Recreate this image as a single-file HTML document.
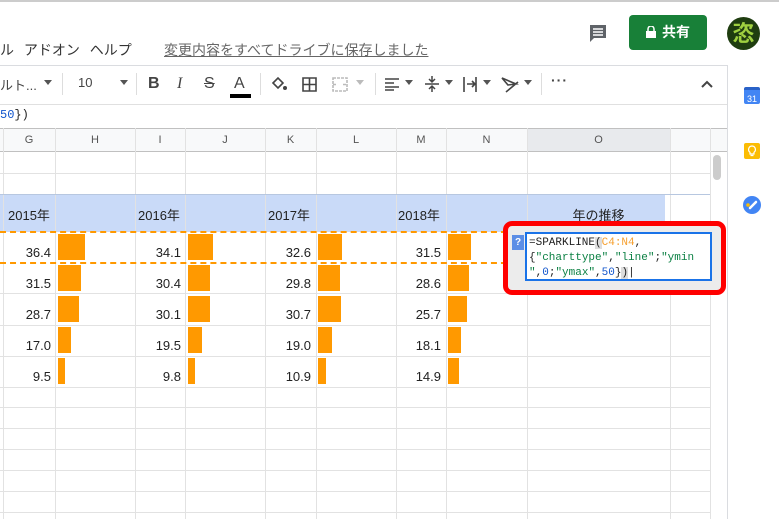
<!DOCTYPE html>
<html><head><meta charset="utf-8"><style>
*{margin:0;padding:0;box-sizing:border-box}
body{width:779px;height:519px;overflow:hidden;background:#fff;font-family:"Liberation Sans","Noto Sans CJK JP",sans-serif;position:relative;color:#222}
.a{position:absolute}
.vl{position:absolute;width:1px;background:#e2e2e2}
.hl{position:absolute;height:1px;background:#e2e2e2}
.num{position:absolute;font-size:13px;text-align:right;width:46px;color:#222}
.bar{position:absolute;background:#ff9900;height:26px}
.tb{position:absolute;top:75px;font-size:14px;color:#444}
.dd{position:absolute;top:80px;width:0;height:0;border-left:4px solid transparent;border-right:4px solid transparent;border-top:5px solid #555}
.dv{position:absolute;top:73px;width:1px;height:22px;background:#ddd}
.ch{position:absolute;top:134px;font-size:11px;color:#555;text-align:center}
.mono{font-family:"Liberation Mono",monospace}
</style></head><body>
<div class="a" style="left:0;top:0;width:779px;height:2px;background:#ccc"></div>
<div class="a" style="left:0;top:40px;font-size:14px;color:#333;white-space:nowrap;word-spacing:6px">ル アドオン ヘルプ</div>
<div class="a" style="left:164px;top:40px;font-size:14px;color:#666;text-decoration:underline;white-space:nowrap">変更内容をすべてドライブに保存しました</div>
<svg class="a" style="left:588px;top:23px" width="20" height="20" viewBox="0 0 20 20"><path d="M2 2h16v13H6l-4 4z" fill="#5f6368"/><path d="M5 6h10M5 9h10M5 12h10" stroke="#fff" stroke-width="1.5"/></svg>
<div class="a" style="left:629px;top:15px;width:78px;height:35px;background:#188038;border-radius:4px;color:#fff;font-size:14px;font-weight:bold;line-height:35px;padding-left:33px">共有</div>
<svg class="a" style="left:646px;top:26px" width="10" height="12" viewBox="0 0 10 12"><rect x="0" y="5" width="10" height="7" fill="#fff"/><path d="M2 5V3a3 3 0 0 1 6 0v2" stroke="#fff" stroke-width="1.5" fill="none"/></svg>
<div class="a" style="left:727px;top:17px;width:33px;height:33px;border-radius:50%;background:#1f3d10;color:#9fd040;font-size:22px;font-weight:bold;text-align:center;line-height:33px">恣</div>
<div class="hl" style="left:0;top:65px;width:727px;background:#dadce0"></div>
<div class="vl" style="left:727px;top:65px;height:454px;background:#dadce0"></div>
<div class="tb" style="left:0;font-size:13px">ルト...</div><div class="dd" style="left:44px"></div>
<div class="dv" style="left:62px"></div>
<div class="tb" style="left:78px;font-size:13px">10</div><div class="dd" style="left:120px"></div>
<div class="dv" style="left:136px"></div>
<div class="tb" style="left:148px;font-weight:bold;font-size:16px">B</div>
<div class="tb" style="left:177px;font-style:italic;font-size:16px;font-family:'Liberation Serif',serif">I</div>
<div class="tb" style="left:204px;font-size:16px;text-decoration:line-through">S</div>
<div class="tb" style="left:234px;font-size:16px">A</div>
<div class="a" style="left:230px;top:94px;width:21px;height:4px;background:#000"></div>
<div class="dv" style="left:260px"></div>
<svg class="a" style="left:270px;top:76px" width="18" height="16" viewBox="0 0 18 16"><path d="M3 7l5-5 5 5-5 5z" stroke="#444" stroke-width="1.6" fill="none"/><circle cx="15" cy="12" r="2" fill="#444"/></svg>
<svg class="a" style="left:302px;top:77px" width="15" height="15" viewBox="0 0 15 15"><path d="M1 1h13v13H1zM7.5 1v13M1 7.5h13" stroke="#444" stroke-width="1.6" fill="none"/></svg>
<svg class="a" style="left:332px;top:77px" width="16" height="15" viewBox="0 0 16 15"><path d="M1 1h14v13H1zM1 7.5h4M11 7.5h4" stroke="#bbb" stroke-width="1.6" fill="none" stroke-dasharray="3 1"/></svg>
<div class="dd" style="left:356px;border-top-color:#bbb"></div>
<div class="dv" style="left:375px"></div>
<svg class="a" style="left:384px;top:77px" width="16" height="14" viewBox="0 0 16 14"><path d="M1 2h14M1 6h9M1 10h14M1 13h9" stroke="#444" stroke-width="1.6"/></svg><div class="dd" style="left:405px"></div>
<svg class="a" style="left:424px;top:75px" width="16" height="18" viewBox="0 0 16 18"><path d="M1 9h14M8 1v5M8 12v5M5 4l3 3 3-3M5 14l3-3 3 3" stroke="#444" stroke-width="1.5" fill="none"/></svg><div class="dd" style="left:445px"></div>
<svg class="a" style="left:462px;top:76px" width="18" height="17" viewBox="0 0 18 17"><path d="M2 1v15M14 1v15M5 8h8M10 5l3 3-3 3" stroke="#444" stroke-width="1.6" fill="none"/></svg><div class="dd" style="left:483px"></div>
<svg class="a" style="left:500px;top:76px" width="20" height="17" viewBox="0 0 20 17"><path d="M2 2l14 6-8 1zM6 16l12-10" stroke="#444" stroke-width="1.6" fill="none"/></svg><div class="dd" style="left:524px"></div>
<div class="dv" style="left:541px"></div>
<div class="tb" style="left:551px;top:72px;font-weight:bold;letter-spacing:1px">···</div>
<svg class="a" style="left:700px;top:79px" width="14" height="10" viewBox="0 0 14 10"><path d="M2 8l5-5 5 5" stroke="#444" stroke-width="2" fill="none"/></svg>
<div class="hl" style="left:0;top:104px;width:727px;background:#e0e0e0"></div>
<div class="a mono" style="left:0;top:108px;font-size:12px;color:#222"><span style="color:#1155cc">50</span>})</div>
<div class="a" style="left:0;top:128px;width:727px;height:24px;background:#f8f9fa;border-top:1px solid #c0c0c0;border-bottom:1px solid #c0c0c0"></div>
<div class="a" style="left:527px;top:129px;width:143px;height:22px;background:#e8eaed"></div>
<div class="ch" style="left:3px;width:52px">G</div><div class="ch" style="left:55px;width:80px">H</div><div class="ch" style="left:135px;width:50px">I</div><div class="ch" style="left:185px;width:80px">J</div><div class="ch" style="left:265px;width:51px">K</div><div class="ch" style="left:316px;width:80px">L</div><div class="ch" style="left:396px;width:50px">M</div><div class="ch" style="left:446px;width:81px">N</div><div class="ch" style="left:527px;width:143px">O</div>
<div class="a" style="left:0;top:194px;width:665px;height:38px;background:#c9daf8"></div>
<div class="vl" style="left:3px;top:128px;height:391px"></div>
<div class="vl" style="left:55px;top:128px;height:391px"></div>
<div class="vl" style="left:135px;top:128px;height:391px"></div>
<div class="vl" style="left:185px;top:128px;height:391px"></div>
<div class="vl" style="left:265px;top:128px;height:391px"></div>
<div class="vl" style="left:316px;top:128px;height:391px"></div>
<div class="vl" style="left:396px;top:128px;height:391px"></div>
<div class="vl" style="left:446px;top:128px;height:391px"></div>
<div class="vl" style="left:527px;top:128px;height:391px"></div>
<div class="vl" style="left:670px;top:128px;height:391px"></div>
<div class="vl" style="left:710px;top:128px;height:391px"></div>
<div class="hl" style="left:0;top:173px;width:710px"></div>
<div class="hl" style="left:0;top:194px;width:710px;background:#b7c7e0"></div>
<div class="hl" style="left:0;top:293px;width:710px"></div>
<div class="hl" style="left:0;top:325px;width:710px"></div>
<div class="hl" style="left:0;top:356px;width:710px"></div>
<div class="hl" style="left:0;top:387px;width:710px"></div>
<div class="hl" style="left:0;top:407px;width:710px"></div>
<div class="hl" style="left:0;top:428px;width:710px"></div>
<div class="hl" style="left:0;top:449px;width:710px"></div>
<div class="hl" style="left:0;top:470px;width:710px"></div>
<div class="hl" style="left:0;top:491px;width:710px"></div>
<div class="hl" style="left:0;top:512px;width:710px"></div>
<div class="a" style="left:0;top:231px;width:527px;border-top:2px dashed #ff9900"></div>
<div class="a" style="left:0;top:262px;width:527px;border-top:2px dashed #ff9900"></div>
<div class="a" style="left:8px;top:205px;font-size:13px">2015年</div>
<div class="a" style="left:138px;top:205px;font-size:13px">2016年</div>
<div class="a" style="left:268px;top:205px;font-size:13px">2017年</div>
<div class="a" style="left:398px;top:205px;font-size:13px">2018年</div>
<div class="a" style="left:527px;top:205px;width:143px;text-align:center;font-size:13px">年の推移</div>
<div class="num" style="left:5px;top:245px">36.4</div><div class="bar" style="left:58px;top:234px;width:27px"></div>
<div class="num" style="left:135px;top:245px">34.1</div><div class="bar" style="left:188px;top:234px;width:25px"></div>
<div class="num" style="left:265px;top:245px">32.6</div><div class="bar" style="left:318px;top:234px;width:24px"></div>
<div class="num" style="left:395px;top:245px">31.5</div><div class="bar" style="left:448px;top:234px;width:23px"></div>
<div class="num" style="left:5px;top:276px">31.5</div><div class="bar" style="left:58px;top:265px;width:23px"></div>
<div class="num" style="left:135px;top:276px">30.4</div><div class="bar" style="left:188px;top:265px;width:22px"></div>
<div class="num" style="left:265px;top:276px">29.8</div><div class="bar" style="left:318px;top:265px;width:22px"></div>
<div class="num" style="left:395px;top:276px">28.6</div><div class="bar" style="left:448px;top:265px;width:21px"></div>
<div class="num" style="left:5px;top:307px">28.7</div><div class="bar" style="left:58px;top:296px;width:21px"></div>
<div class="num" style="left:135px;top:307px">30.1</div><div class="bar" style="left:188px;top:296px;width:22px"></div>
<div class="num" style="left:265px;top:307px">30.7</div><div class="bar" style="left:318px;top:296px;width:23px"></div>
<div class="num" style="left:395px;top:307px">25.7</div><div class="bar" style="left:448px;top:296px;width:19px"></div>
<div class="num" style="left:5px;top:338px">17.0</div><div class="bar" style="left:58px;top:327px;width:13px"></div>
<div class="num" style="left:135px;top:338px">19.5</div><div class="bar" style="left:188px;top:327px;width:14px"></div>
<div class="num" style="left:265px;top:338px">19.0</div><div class="bar" style="left:318px;top:327px;width:14px"></div>
<div class="num" style="left:395px;top:338px">18.1</div><div class="bar" style="left:448px;top:327px;width:13px"></div>
<div class="num" style="left:5px;top:369px">9.5</div><div class="bar" style="left:58px;top:358px;width:7px"></div>
<div class="num" style="left:135px;top:369px">9.8</div><div class="bar" style="left:188px;top:358px;width:7px"></div>
<div class="num" style="left:265px;top:369px">10.9</div><div class="bar" style="left:318px;top:358px;width:8px"></div>
<div class="num" style="left:395px;top:369px">14.9</div><div class="bar" style="left:448px;top:358px;width:11px"></div>
<div class="a" style="left:713px;top:155px;width:8px;height:25px;background:#ccc;border-radius:4px"></div>
<div class="a" style="left:503px;top:221px;width:223px;height:74px;border:5px solid #f00;border-radius:9px;background:#ececec"></div>
<div class="a" style="left:512px;top:235px;width:12px;height:15px;background:#5c8ee6;color:#fff;font-size:10px;font-weight:bold;text-align:center;line-height:15px">?</div>
<div class="a mono" style="left:525px;top:232px;width:187px;height:49px;background:#fff;border:2px solid #1a73e8;font-size:11px;line-height:15px;padding:2px 0 0 2px;color:#222;white-space:pre">=SPARKLINE<span style="background:#ddd">(</span><span style="color:#f6a030">C4:N4</span>,
{<span style="color:#0b8043">"charttype"</span>,<span style="color:#0b8043">"line"</span>;<span style="color:#0b8043">"ymin</span>
<span style="color:#0b8043">"</span>,<span style="color:#1155cc">0</span>;<span style="color:#0b8043">"ymax"</span>,<span style="color:#1155cc">50</span>}<span style="background:#ddd">)</span>|</div>
<div class="a" style="left:744px;top:87px;width:16px;height:17px;background:#4285f4;border-radius:2px;color:#fff;font-size:9px;text-align:center;line-height:19px;border-top:3px solid #2a62c8">31</div>
<div class="a" style="left:744px;top:143px;width:16px;height:16px;background:#fbbc04;border-radius:2px"></div>
<svg class="a" style="left:747px;top:145px" width="10" height="12" viewBox="0 0 10 12"><path d="M5 1a3.5 3.5 0 0 0-2 6.3V9h4V7.3A3.5 3.5 0 0 0 5 1zM3.5 10.5h3" stroke="#fff" stroke-width="1.2" fill="none"/></svg>
<div class="a" style="left:743px;top:196px;width:18px;height:18px;background:#4285f4;border-radius:50%"></div>
<svg class="a" style="left:743px;top:196px" width="18" height="18" viewBox="0 0 18 18"><path d="M7 12l6-6" stroke="#fff" stroke-width="2.5" stroke-linecap="round"/><circle cx="5" cy="9" r="1.8" fill="#fbbc04"/></svg>
</body></html>
